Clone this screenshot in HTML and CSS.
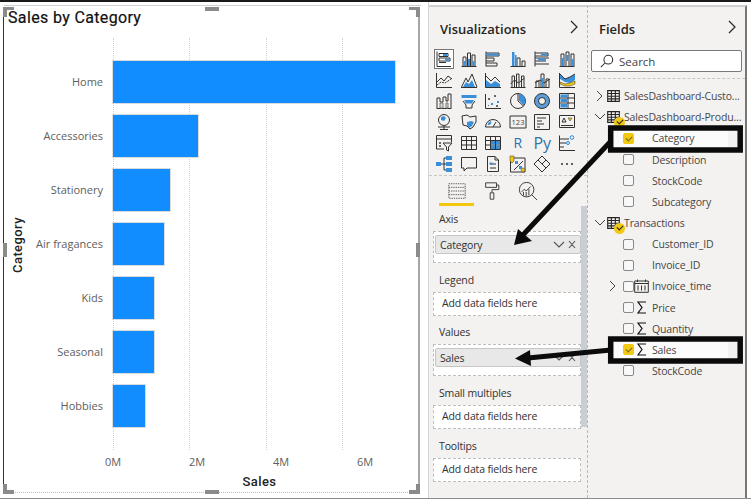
FILE: index.html
```html
<!DOCTYPE html>
<html lang="en">
<head>
<meta charset="utf-8">
<title>Sales by Category</title>
<link rel="stylesheet" href="styles.css">
</head>
<body>
<div class="app">
  <main class="canvas">
    <section class="visual">
      <i class="handle tl"></i><i class="handle tc"></i><i class="handle tr"></i>
      <i class="handle ml"></i><i class="handle mr"></i>
      <i class="handle bl"></i><i class="handle bc"></i><i class="handle br"></i>
      <h1 class="chart-title">Sales by Category</h1>
      <div class="chart">
        <div class="y-title"><span>Category</span></div>
        <div class="cats">
          <span>Home</span><span>Accessories</span><span>Stationery</span><span>Air fragances</span><span>Kids</span><span>Seasonal</span><span>Hobbies</span>
        </div>
        <div class="plot">
          <div class="grid-lines"><i></i><i></i><i></i><i></i></div>
          <div class="bar" style="width:282px"></div>
          <div class="bar" style="width:85px"></div>
          <div class="bar" style="width:57px"></div>
          <div class="bar" style="width:51px"></div>
          <div class="bar" style="width:41px"></div>
          <div class="bar" style="width:41px"></div>
          <div class="bar" style="width:32px"></div>
        </div>
        <div class="ticks"><span>0M</span><span>2M</span><span>4M</span><span>6M</span></div>
        <div class="x-title">Sales</div>
      </div>
    </section>
  </main>

  <aside class="viz">
    <header class="pane-head"><h2>Visualizations</h2><svg class="chev" viewBox="0 0 10 14"><path d="M2 1l6 6-6 6"/></svg></header>
    <div class="gallery">
      <svg class="vi sel" viewBox="0 0 18 18"><path class="k" d="M2 1.500v15h14"/><path class="k" d="M4 3.500h9v3H4zM4 8h11v3H4zM4 12.500h7"/><path class="b" d="M8 4h4v2H8zM10 8.500h4v2h-4z"/></svg>
      <svg class="vi" viewBox="0 0 18 18"><path class="k" d="M1.500 16.500h15M3 16V7h3v9M7.500 16V3h3v13M12 16V5h3v11"/><path class="b" d="M3.500 11h2v5h-2zM8 9h2v7H8zM12.500 11h2v5h-2z"/></svg>
      <svg class="vi" viewBox="0 0 18 18"><path class="k" d="M2 1.500v15M2 3h13v3H2M2 8h8v3H2M2 13h11v3H2"/><path class="b" d="M2.500 3.500h12v2h-12z"/></svg>
      <svg class="vi" viewBox="0 0 18 18"><path class="k" d="M1.500 16.500h15M8 16V8h3v8M13 16v-5h3v5"/><path class="b" d="M3 2h2.500v14H3zM6 5h1.500v11H6z"/></svg>
      <svg class="vi" viewBox="0 0 18 18"><path class="k" d="M2 1.500v15M2 3h13v3H2M2 8h14M2 11h11M2 14h14"/><path class="b" d="M8 3.500h6v2H8zM5 8.500h8v2H5z"/></svg>
      <svg class="vi" viewBox="0 0 18 18"><path class="k" d="M1.500 16.500h15M3 16V4h3v12M8 16V2h3v14M13 16V4h3v12"/><path class="b" d="M3.500 8h2v8h-2zM8.500 5h2v6h-2zM13.500 9h2v7h-2z"/></svg>

      <svg class="vi" viewBox="0 0 18 18"><path class="k" d="M1.500 2v14.500H17M2 11l4-4 3 3 4-5 4 3"/><path class="k" d="M2 14l4-3 4 1 6-4" stroke-dasharray="2 1"/></svg>
      <svg class="vi" viewBox="0 0 18 18"><path class="k" d="M1 16.500h16M1.500 16L6 7l2 4 4-8 5 13"/><path class="b" d="M3 16l3-5 3 2 3-4 3 7z"/></svg>
      <svg class="vi" viewBox="0 0 18 18"><path class="k" d="M1.500 2v14.500H17M2 5l5 5 4-4 5 5"/><path class="b" d="M2 9l5 4 4-3 5 3v3H2z"/></svg>
      <svg class="vi" viewBox="0 0 18 18"><path class="k" d="M1.500 16.500h15M3 16V5h2.500v11M7.500 16V3H10v13M12.500 16V5H15v11M1.500 13l4-4 4 3 6-5"/></svg>
      <svg class="vi" viewBox="0 0 18 18"><path class="k" d="M1.500 16.500h15M3 16v-6h3v6M8 16V3h3v13M13 16V8h3v8M2 12l5-3 4 3 6-4"/><path class="b" d="M8.500 7h2v9h-2z"/></svg>
      <svg class="vi" viewBox="0 0 18 18"><path class="b" d="M2 3l5 5 5-2 5-3v6l-5 3-5-1-5-3z"/><path class="y" d="M2 11l5 2 5-1 5-2v3l-5 2H7l-5-2z"/><path class="k" d="M1.500 2v14.500H17M2 3l5 5 5-2 5-3"/></svg>

      <svg class="vi" viewBox="0 0 18 18"><path class="k" d="M1.500 16.500h15M2 16V6h3v4h3V5h3V9h2V2h3v14"/><path class="s" d="M5 16v-5h3v5zM11 16v-5h2v5z"/></svg>
      <svg class="vi" viewBox="0 0 18 18"><path class="k" d="M3 9l3 4v3h6v-3l3-4"/><path class="b" d="M1.500 3h15v3h-15zM4 8h10l-2 3.500H6z"/></svg>
      <svg class="vi" viewBox="0 0 18 18"><path class="k" d="M1.500 2v14.500H17"/><path class="b" d="M7 11h2v2H7zM13 9h2v2h-2z"/><path class="q" d="M4 6h2v2H4zM10 3h2v2h-2zM12 13h2v2h-2zM4 13h1v1H4z"/></svg>
      <svg class="vi" viewBox="0 0 18 18"><circle class="k" cx="9" cy="9" r="7.500"/><path class="k" d="M9 9V1.500M9 9l5.500 5"/><path class="b" d="M10 1.800a7 7 0 0 1 6.500 7.200 7 7 0 0 1-1.800 4.500L10 8.500z"/></svg>
      <svg class="vi" viewBox="0 0 18 18"><circle class="ring" cx="9" cy="9" r="5.500"/><circle class="k" cx="9" cy="9" r="7.500"/><circle class="k" cx="9" cy="9" r="3.500"/></svg>
      <svg class="vi" viewBox="0 0 18 18"><path class="k" d="M1.500 1.500h15v15h-15zM10 1.500v15M1.500 6h15M1.500 11h15"/><path class="b" d="M2.500 2.500h6.500v3H2.500zM2.500 7h6.500v3H2.500zM2.500 12h6.500v3.500H2.500z"/></svg>

      <svg class="vi" viewBox="0 0 18 18"><circle class="k" cx="9" cy="7" r="5.500"/><path class="k" d="M3 14h12M9 12.500V16M5 16.500h8"/><path class="b" d="M6 4l3-1 2 2-2 3-3-1z"/></svg>
      <svg class="vi" viewBox="0 0 18 18"><path class="k" d="M2 3l5-1 3 2 6-1v6l-3 5-3 2-3-3-4-1z"/><path class="b" d="M7 9l4-1 3 1-2 4-3 2-2-3z"/></svg>
      <svg class="vi" viewBox="0 0 18 18"><path class="k" d="M1.500 14a7.500 7.500 0 0 1 15 0zM9 14l3-5"/><path class="b" d="M3.500 12a5.500 5.500 0 0 1 3-4l1 2-2 2z"/></svg>
      <svg class="vi wide" viewBox="0 0 18 18"><path class="k" d="M1 3h16v12H1z"/><text x="9" y="12" class="vt">123</text></svg>
      <svg class="vi" viewBox="0 0 18 18"><path class="k" d="M1.500 1.500h15v15h-15zM4 5h9M4 8h5M4 11h7M4 14h3"/></svg>
      <svg class="vi" viewBox="0 0 18 18"><path class="k" d="M1.500 2.500h15v12h-15zM3 12.500h12"/><path class="k" d="M6 5l2 4H4z"/><path class="y" d="M10 5h4l-2 3z"/></svg>

      <svg class="vi" viewBox="0 0 18 18"><path class="k" d="M9 15H1.500V1.500h15V8M1.500 5h15"/><path class="k" d="M8 9h9l-3.500 4v4l-2-1v-3z"/><path class="q" d="M4 8h2v2H4zM4 11h2v2H4z"/></svg>
      <svg class="vi" viewBox="0 0 18 18"><path class="k" d="M1.500 2.500h15v13h-15zM1.500 6.500h15M1.500 11h15M6.500 2.500v13M11.500 2.500v13"/></svg>
      <svg class="vi" viewBox="0 0 18 18"><path class="k" d="M1.500 2.500h15v13h-15zM1.500 6.500h15M1.500 11h15M6.500 2.500v13M11.500 2.500v13"/><path class="b" d="M7 7h4v3.500H7zM12 7h4v3.500h-4zM12 11.500h4v3.500h-4zM7 11.500h4v3.500H7z"/></svg>
      <span class="vi-txt r">R</span>
      <span class="vi-txt py">Py</span>
      <svg class="vi" viewBox="0 0 18 18"><path class="k" d="M1.500 1.500v15H17M2 5h9M2 9h6M2 13h4"/><circle class="c" cx="14" cy="3.500" r="1.800"/><circle class="c" cx="10" cy="9" r="1.500"/></svg>

      <svg class="vi" viewBox="0 0 18 18"><path class="k" d="M5 9h4M9 3v12M9 3h2M9 15h2M9 9h2"/><path class="b" d="M1 7h5v4H1zM11 1h6v4h-6zM11 7h6v4h-6zM11 13h6v4h-6z"/></svg>
      <svg class="vi" viewBox="0 0 18 18"><path class="k" d="M1.500 2.500h15v10.500H7l-3 3v-3H1.500z"/></svg>
      <svg class="vi" viewBox="0 0 18 18"><path class="k" d="M3.500 1.500H11l3.500 3.500v11.500h-11zM11 1.500V5h3.500M6 9h6M6 13h6"/><path class="b" d="M5.500 7.500h3v2h-3z"/></svg>
      <svg class="vi" viewBox="0 0 18 18"><path class="k" d="M3 3h13v14H1.500V6M5 15l9-9"/><path class="y" d="M1 1h4v5L3 8 1 6z"/><circle class="y" cx="14" cy="15" r="2"/><path class="b" d="M6 6h3v3H6zM10 11h3v3h-3z"/></svg>
      <svg class="vi" viewBox="0 0 18 18"><path class="k" d="M9 1l8 8-8 8-8-8zM5 5l8 8M13 5L9 9"/></svg>
      <svg class="vi" viewBox="0 0 18 18"><path class="dots" d="M3 9h2M8 9h2M13 9h2"/></svg>
    </div>

    <nav class="tabs">
      <span class="tab active"><svg viewBox="0 0 22 20" class="tab-ico"><path class="dash" d="M2 2h18v16H2zM2 6h18M2 10h18M2 14h18"/></svg></span>
      <span class="tab"><svg viewBox="0 0 22 22" class="tab-ico"><path class="k" d="M4 2h12v5H4zM16 4.500h2.500v5H11v3"/><path class="k" d="M9 13h4v7H9z"/></svg></span>
      <span class="tab"><svg viewBox="0 0 22 22" class="tab-ico"><circle class="k" cx="9.500" cy="9.500" r="8"/><path class="k" d="M15 15l6 6M4 12l3-3 2 2 5-5"/><path class="k" d="M6 16v-4M9 17v-5M12 16V9"/></svg></span>
    </nav>

    <div class="wells">
      <div class="scroll"></div>
      <div class="well-group first">
        <div class="well-label">Axis</div>
        <div class="well tall">
          <div class="chip">Category<svg viewBox="0 0 24 10" class="chip-ico"><path d="M1 2l5 5 5-5M16 1l6 7M22 1l-6 7"/></svg></div>
        </div>
      </div>
      <div class="well-group">
        <div class="well-label">Legend</div>
        <div class="well empty">Add data fields here</div>
      </div>
      <div class="well-group">
        <div class="well-label">Values</div>
        <div class="well tall">
          <div class="chip">Sales<svg viewBox="0 0 24 10" class="chip-ico"><path d="M1 2l5 5 5-5M16 1l6 7M22 1l-6 7"/></svg></div>
        </div>
      </div>
      <div class="well-group">
        <div class="well-label">Small multiples</div>
        <div class="well empty">Add data fields here</div>
      </div>
      <div class="well-group">
        <div class="well-label">Tooltips</div>
        <div class="well empty">Add data fields here</div>
      </div>
    </div>
  </aside>

  <aside class="fields">
    <header class="pane-head"><h2>Fields</h2><svg class="chev" viewBox="0 0 10 14"><path d="M2 1l6 6-6 6"/></svg></header>
    <div class="search"><svg viewBox="0 0 16 16"><circle cx="9.500" cy="6.500" r="5"/><path d="M6 10l-5 5"/></svg>Search</div>
    <ul class="tree">
      <li class="row table"><svg class="caret" viewBox="0 0 12 12"><path d="M3 1l5 5-5 5"/></svg><span class="tbl"><svg viewBox="0 0 14 13"><path d="M.7.700h12.600v11.600H.7zM.7 3.800h12.600M.7 6.800h12.600M.7 9.600h12.600M4.700.7v11.600M9 .7v11.600"/></svg></span><span class="name">SalesDashboard-Custo...</span></li>
      <li class="row table"><svg class="caret" viewBox="0 0 12 12"><path d="M1 3l5 5 5-5"/></svg><span class="tbl"><svg viewBox="0 0 14 13"><path d="M.7.700h12.600v11.600H.7zM.7 3.800h12.600M.7 6.800h12.600M.7 9.600h12.600M4.700.7v11.600M9 .7v11.600"/></svg><i class="badge"></i></span><span class="name">SalesDashboard-Produ...</span></li>
      <li class="row field hl"><span class="slot"></span><i class="box on"></i><span class="sym"></span><span class="name">Category</span></li>
      <li class="row field"><span class="slot"></span><i class="box"></i><span class="sym"></span><span class="name">Description</span></li>
      <li class="row field"><span class="slot"></span><i class="box"></i><span class="sym"></span><span class="name">StockCode</span></li>
      <li class="row field"><span class="slot"></span><i class="box"></i><span class="sym"></span><span class="name">Subcategory</span></li>
      <li class="row table"><svg class="caret" viewBox="0 0 12 12"><path d="M1 3l5 5 5-5"/></svg><span class="tbl"><svg viewBox="0 0 14 13"><path d="M.7.700h12.600v11.600H.7zM.7 3.800h12.600M.7 6.800h12.600M.7 9.600h12.600M4.700.7v11.600M9 .7v11.600"/></svg><i class="badge"></i></span><span class="name">Transactions</span></li>
      <li class="row field"><span class="slot"></span><i class="box"></i><span class="sym"></span><span class="name">Customer_ID</span></li>
      <li class="row field"><span class="slot"></span><i class="box"></i><span class="sym"></span><span class="name">Invoice_ID</span></li>
      <li class="row field"><svg class="caret" viewBox="0 0 12 12"><path d="M3 1l5 5-5 5"/></svg><i class="box"></i><span class="sym"><svg class="cal" viewBox="0 0 15 14"><path d="M.7 2h13.600v11.300H.7zM.7 4.500h13.600M3.500.5V3M11.500.5V3M4 6.500v5M7.500 6.500v5M11 6.500v5"/></svg></span><span class="name">Invoice_time</span></li>
      <li class="row field"><span class="slot"></span><i class="box"></i><span class="sym"><svg class="sigma" viewBox="0 0 10 13"><path d="M9 1H1l4 5.500L1 12h8"/></svg></span><span class="name">Price</span></li>
      <li class="row field"><span class="slot"></span><i class="box"></i><span class="sym"><svg class="sigma" viewBox="0 0 10 13"><path d="M9 1H1l4 5.500L1 12h8"/></svg></span><span class="name">Quantity</span></li>
      <li class="row field hl"><span class="slot"></span><i class="box on"></i><span class="sym"><svg class="sigma" viewBox="0 0 10 13"><path d="M9 1H1l4 5.500L1 12h8"/></svg></span><span class="name">Sales</span></li>
      <li class="row field"><span class="slot"></span><i class="box"></i><span class="sym"></span><span class="name">StockCode</span></li>
    </ul>
  </aside>

  <svg class="callouts" viewBox="0 0 751 499">
    <rect x="610.700" y="128" width="129.500" height="22"/>
    <rect x="610.700" y="339" width="129.500" height="22"/>
    <path class="line" d="M611 141L522 236"/>
    <path class="head" d="M514 245L518 229L532 241z"/>
    <path class="line" d="M611 350L528 358"/>
    <path class="head" d="M515 358.500L530 350L531 366z"/>
  </svg>
</div>
</body>
</html>
```

FILE: styles.css
```css
* { box-sizing: border-box; }
html, body { margin: 0; padding: 0; background: #fff; }
body { width: 751px; height: 499px; overflow: hidden; font-family: "Open Sans", "Noto Sans", sans-serif; color: #252423; }
h1, h2, ul { margin: 0; padding: 0; }
ul { list-style: none; }

.app { position: relative; display: flex; width: 751px; height: 499px; border-top: 2px solid #1a1a1a; border-bottom: 1px solid #8d8d8d; }

/* canvas */
.canvas { width: 429px; flex: none; padding: 6px 8px 3px 3px; border-right: 1px solid #d4d4d4; background: linear-gradient(#d0d0d0, #d0d0d0) 4px 3px / 417px 1px no-repeat; }
.visual { position: relative; height: 485px; padding: 0 0 0 4px; border-bottom: 1px dotted #bdbdbd; border-right: 2px solid #a6a6a6; border-left: 1px solid #333; }
.handle { position: absolute; border: 0 solid #8b8b8b; }
.tl, .tr, .bl, .br { width: 11px; height: 10px; }
.tl { left: -1px; top: -1px; border-width: 3px 0 0 4px; }
.tr { right: -2px; top: -1px; border-width: 3px 4px 0 0; }
.bl { left: -1px; bottom: -2px; border-width: 0 0 4px 4px; }
.br { right: -2px; bottom: -2px; border-width: 0 4px 4px 0; }
.tc, .bc { width: 14px; height: 4px; left: 201px; background: #8b8b8b; }
.tc { top: -1px; }
.bc { bottom: -2px; }
.ml, .mr { width: 4px; height: 14px; top: 235px; background: #8b8b8b; }
.ml { left: -1px; }
.mr { right: -2px; }

.chart-title { font: 400 16px/20px Roboto, sans-serif; letter-spacing: .35px; color: #111; height: 30px; -webkit-text-stroke: .2px #111; }
.chart { display: grid; grid-template-columns: 19px 76px 1fr; grid-template-rows: 412px 23px 19px; }
.y-title { grid-row: 1; display: flex; align-items: center; justify-content: center; padding-top: 2px; }
.y-title span { display: block; transform: rotate(-90deg); font: 500 13px/16px Roboto, sans-serif; letter-spacing: .4px; color: #222; }
.cats { display: flex; flex-direction: column; padding-top: 23px; align-items: flex-end; font-size: 11px; color: #605e5c; }
.cats span { height: 54px; line-height: 42px; white-space: nowrap; }
.plot { position: relative; display: flex; flex-direction: column; gap: 12px; padding-top: 23px; margin-left: 10px; }
.grid-lines { position: absolute; inset: 0; display: flex; }
.grid-lines i { width: 84px; border-left: 1px dotted #d2d2d2; }
.bar { position: relative; height: 42px; background: #118dff; box-shadow: 0 0 0 1px #dcdcdc; }
.ticks { grid-column: 3; display: flex; margin-left: -32px; align-items: center; font-size: 11px; color: #605e5c; }
.ticks span { width: 84px; text-align: center; }
.x-title { grid-column: 3; text-align: center; font: 500 13px/18px Roboto, sans-serif; letter-spacing: .4px; color: #222; padding-right: 2px; }

/* panes */
.viz { width: 159px; flex: none; margin-top: 3px; background: #f3f2f1; border-top: 2px solid #d2d0ce; border-right: 1px dashed #b8b8b8; position: relative; }
.fields { width: 159px; flex: none; margin-top: 3px; background: #f3f2f1; border-top: 2px solid #d2d0ce; border-right: 2px solid #777; }
.pane-head { display: flex; justify-content: space-between; align-items: center; height: 36px; padding: 7px 8px 0 11px; }
.pane-head h2 { font-size: 13px; font-weight: 600; line-height: 20px; color: #252423; }
.chev { width: 10px; height: 14px; margin-top: -4px; fill: none; stroke: #252423; stroke-width: 1.200; }

/* visual gallery */
.gallery { display: grid; grid-template-columns: repeat(6, 24.500px); grid-auto-rows: 21px; padding-left: 3px; margin-top: 5px; padding-bottom: 2px; border-bottom: 1px dashed #c8c6c4; align-items: center; justify-items: center; height: 128px; }
.vi { width: 18px; height: 18px; display: block; }
.vi.sel { background: #fff; outline: 1px solid #777; }
.k, .s, .c, .ring, .dots, .dash { fill: none; stroke: #323130; stroke-width: 1; }
.b { fill: #3a8fd8; stroke: none; }
.y { fill: #f2c811; stroke: #333; stroke-width: .5; }
.q { fill: #666; }
.s { stroke: #777; fill: #ddd; }
.c { stroke: #2b88d8; }
.ring { stroke: #5a9fdc; stroke-width: 4; }
.dots { stroke-width: 1.500; }
.dash { stroke-dasharray: 1.500 1; stroke: #555; }
.vt { font: 7.500px "Open Sans", sans-serif; text-anchor: middle; fill: #444; }
.vi-txt { font-weight: 500; color: #2b6fb0; line-height: 18px; }
.vi-txt.r { font-size: 14px; }
.vi-txt.py { font-size: 16px; color: #3572a5; }

.tabs { display: flex; height: 31px; }
.tab { display: flex; justify-content: center; width: 36px; padding-top: 5px; }
.tab.active { width: 35px; margin-left: 10px; height: 30px; border-bottom: 3px solid #f2c811; }
.tab + .tab { margin-left: 0; }
.tab-ico { width: 20px; height: 20px; }
.wells { position: relative; padding: 0 6px 0 4px; }
.scroll { position: absolute; right: 0; top: -1px; width: 6px; height: 221px; background: #c8ced3; }
.well-label { font-size: 10.500px; letter-spacing: -.15px; line-height: 16px; color: #323130; padding-left: 6px; margin-bottom: 4px; }
.well-group { margin-bottom: 8.700px; }
.well-group.first { padding-top: 4px; }
.well { width: 148px; background: #fff; border: 1px dashed #c0bebc; font-size: 10.500px; letter-spacing: -.15px; color: #323130; }
.well.empty { height: 24px; line-height: 21px; padding-left: 8px; }
.well.tall { height: 32px; padding: 3px 0 0 1px; }
.chip { display: flex; justify-content: space-between; align-items: center; width: 146px; height: 19px; padding: 0 3px 0 4px; background: #e8e8e8; border: 1px solid #c8c6c4; border-radius: 2px; }
.chip-ico { width: 24px; height: 10px; fill: none; stroke: #555; stroke-width: 1.100; }

/* fields */
.search { display: flex; align-items: center; gap: 5px; width: 151px; height: 22px; margin: 7px 0 0 3px; padding-left: 8px; background: #fff; border: 1px solid #7a7a7a; border-radius: 2px; font-size: 11.500px; color: #444; }
.search svg { width: 14px; height: 14px; fill: none; stroke: #333; stroke-width: 1.200; }
.tree { margin-top: 6px; padding-top: 6.600px; border-top: 1px dashed #c8c6c4; }
.row { display: flex; align-items: center; height: 21.150px; font-size: 10.500px; letter-spacing: -.15px; color: #484644; white-space: nowrap; }
.table { padding-left: 6px; }
.field { padding-left: 19px; }
.caret { width: 12px; height: 12px; flex: none; fill: none; stroke: #444; stroke-width: 1; }
.slot { width: 12px; flex: none; }
.tbl { position: relative; width: 18px; flex: none; padding-left: 1px; display: block; height: 13px; }
.tbl svg { display: block; width: 13px; height: 12px; fill: none; stroke: #252423; stroke-width: 1.200; }
.badge { position: absolute; left: 8px; top: 6px; width: 11px; height: 11px; border-radius: 50%; background: #f2c811; }
.badge::after { content: ""; position: absolute; left: 3px; top: 2px; width: 5px; height: 3px; border: solid #222; border-width: 0 0 1px 1px; transform: rotate(-45deg); }
.box { position: relative; width: 11px; height: 11px; flex: none; margin-left: 4px; border: 1px solid #8a8886; border-radius: 2px; background: #f8f8f8; }
.box.on { background: #f2c811; border-color: #f2c811; }
.box.on::after { content: ""; position: absolute; left: 2px; top: 2px; width: 5px; height: 3px; border: solid #7a6a20; border-width: 0 0 1px 1px; transform: rotate(-45deg); }
.sym { width: 18px; flex: none; display: flex; padding-left: 3px; }
.sigma { width: 10px; height: 13px; fill: none; stroke: #111; stroke-width: 1.200; }
.cal { width: 15px; height: 14px; margin-left: -3px; fill: none; stroke: #333; stroke-width: 1; }
.hl { background: linear-gradient(#fbfbfb, #fbfbfb) 20px 0 / 120px 100% no-repeat; }

/* callouts */
.callouts { position: absolute; left: 0; top: -2px; width: 751px; height: 499px; pointer-events: none; }
.callouts rect { fill: none; stroke: #0b0b0b; stroke-width: 5.500; }
.callouts .line { fill: none; stroke: #0b0b0b; stroke-width: 5; }
.callouts .head { fill: #0b0b0b; }
```
